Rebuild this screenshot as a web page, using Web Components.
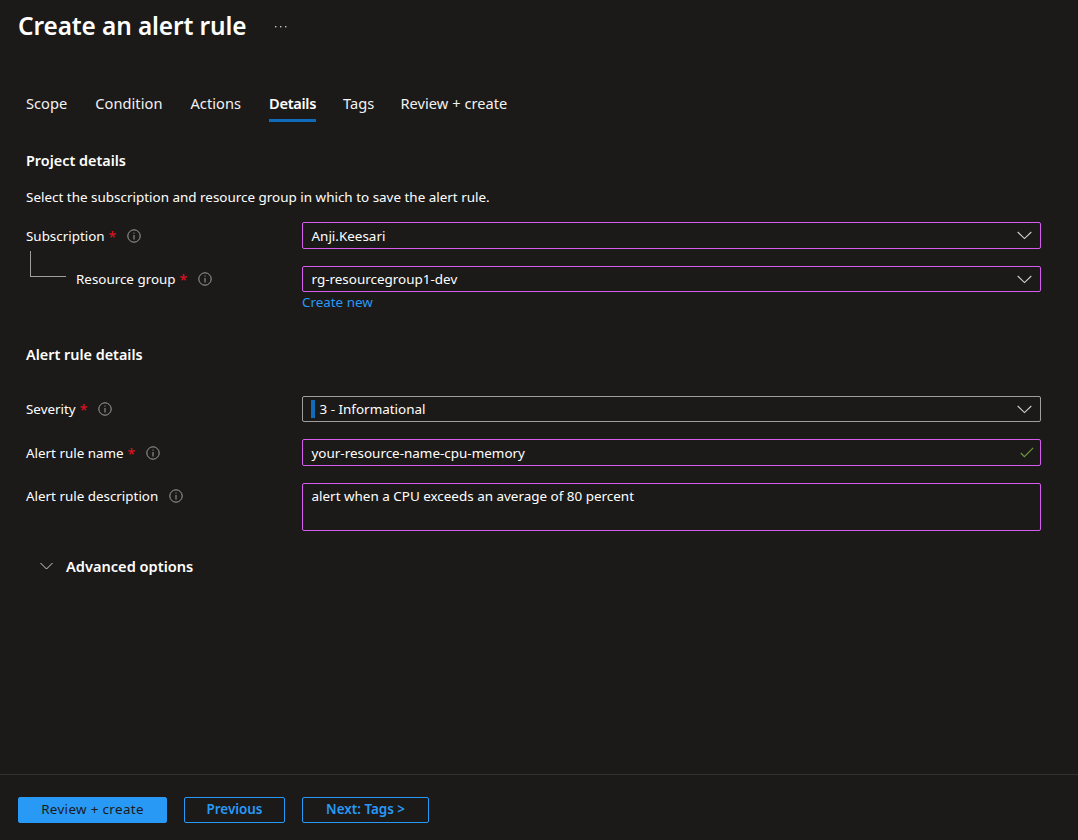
<!DOCTYPE html>
<html lang="en"><head><meta charset="utf-8"><title>Create an alert rule</title>
<style>
html,body{margin:0;height:100%;background:#1b1a19}
body{font:13.4px/18px "Noto Sans","Open Sans",sans-serif;color:#fff;overflow:hidden}
</style></head><body>
<alert-page>
  <page-title slot="title">Create an alert rule</page-title>
  <tab-item slot="tabs">Scope</tab-item>
  <tab-item slot="tabs" style="margin-left:28px">Condition</tab-item>
  <tab-item slot="tabs" style="margin-left:28px">Actions</tab-item>
  <tab-item slot="tabs" active style="margin-left:28px">Details</tab-item>
  <tab-item slot="tabs" style="margin-left:27px">Tags</tab-item>
  <tab-item slot="tabs" style="margin-left:26px">Review + create</tab-item>

  <section-head style="margin-top:29px">Project details</section-head>
  <p-text style="margin-top:17px">Select the subscription and resource group in which to save the alert rule.</p-text>

  <form-row style="margin-top:16px" label="Subscription" required>
    <field-box kind="select" h="27">Anji.Keesari</field-box>
  </form-row>
  <form-row style="margin-top:17px" label="Resource group" required nested tight>
    <field-box kind="select" h="26">rg-resourcegroup1-dev</field-box>
  </form-row>
  <link-text>Create new</link-text>

  <section-head style="margin-top:34px">Alert rule details</section-head>

  <form-row style="margin-top:31px" label="Severity" required tight>
    <field-box kind="select" h="26" neutral sev>3 - Informational</field-box>
  </form-row>
  <form-row style="margin-top:17px" label="Alert rule name" required>
    <field-box kind="check" h="27">your-resource-name-cpu-memory</field-box>
  </form-row>
  <form-row style="margin-top:17px" label="Alert rule description" tight>
    <field-box kind="area" h="48">alert when a CPU exceeds an average of 80 percent</field-box>
  </form-row>

  <advanced-toggle>Advanced options</advanced-toggle>

  <action-button slot="footer" primary w="149">Review + create</action-button>
  <action-button slot="footer" w="101" style="margin-left:17px">Previous</action-button>
  <action-button slot="footer" w="127" style="margin-left:17px">Next: Tags &gt;</action-button>
</alert-page>
<script>
function def(name, html, cls){
  const t=document.createElement('template');t.innerHTML=html;
  customElements.define(name,class extends HTMLElement{
    constructor(){super();this.attachShadow({mode:'open'}).appendChild(t.content.cloneNode(true));}
    connectedCallback(){cls&&cls.call(this,this.shadowRoot);}
  });
}
def('alert-page',`<style>
:host{display:flex;flex-direction:column;height:840px;box-sizing:border-box}
.head{padding:9px 18px 0;display:flex;height:42px;box-sizing:border-box}
.tabs{display:flex;padding:0 26px;margin-top:51px;height:29px}
.body{flex:1;padding:0 37px 0 26px;display:flex;flex-direction:column}
.foot{height:66px;box-sizing:border-box;border-top:1px solid #323130;padding:22px 18px 0;display:flex;align-items:flex-start}
</style>
<div class="head"><slot name="title"></slot></div>
<div class="tabs"><slot name="tabs"></slot></div>
<div class="body"><slot></slot></div>
<div class="foot"><slot name="footer"></slot></div>`);
def('page-title',`<style>
:host{display:flex;align-items:center;font-size:24.4px;line-height:36px;font-weight:600;letter-spacing:-.1px;white-space:nowrap}
.more{margin:2px 0 0 29px;display:block}
</style><slot></slot><svg class="more" width="12" height="4" viewBox="0 0 12 4" aria-hidden="true"><g fill="#c8c6c4"><rect x="0" y="1" width="1.4" height="1.4"/><rect x="5" y="1" width="1.4" height="1.4"/><rect x="10" y="1" width="1.4" height="1.4"/></g></svg>`);
def('tab-item',`<style>
:host{display:block;height:29px;box-sizing:border-box;line-height:20px;font-size:14.6px;letter-spacing:.05px;white-space:nowrap;color:#f3f2f1}
:host([active]){font-weight:600;color:#fff;border-bottom:3px solid #0f6cbd;letter-spacing:-.3px}
</style><slot></slot>`);
def('section-head',`<style>:host{display:block;font-weight:600;font-size:14.4px;line-height:20px}</style><slot></slot>`);
def('p-text',`<style>:host{display:block;font-size:13.45px;line-height:18px;white-space:nowrap;color:#fff}</style><slot></slot>`);
def('link-text',`<style>:host{display:block;margin-left:276px;margin-top:1px;line-height:18px;color:#2899f5;font-size:13.4px}</style><slot></slot>`);
const info=`<svg width="14" height="14" viewBox="0 0 14 14" aria-hidden="true"><circle cx="7" cy="7" r="6.2" fill="none" stroke="#a19f9d" stroke-width="1"/><rect x="6.5" y="6" width="1" height="4.500" fill="#a19f9d"/><rect x="6.5" y="3.600" width="1" height="1" fill="#a19f9d"/></svg>`;
def('form-row',`<style>
:host{display:grid;grid-template-columns:276px 739px;align-items:start}
.lab{display:flex;align-items:center;height:27px;white-space:nowrap;font-size:13.4px;position:relative}
:host([tight]) .lab{margin-top:-1px}
.lab.n{padding-left:50px}
.req{color:#e81123;margin-left:4px;font-size:14px;line-height:14px;height:12px}
.info{display:flex;margin-left:10.5px}
.tree{position:absolute;left:4px;top:-14px;width:36px;height:26px;box-sizing:border-box;border-left:1px solid #a19f9d;border-bottom:1px solid #a19f9d}
</style><div class="lab"><span class="t"></span><span class="req"></span><span class="info">${info}</span></div><slot></slot>`,function(r){
  r.querySelector('.t').textContent=this.getAttribute('label');
  if(this.hasAttribute('required'))r.querySelector('.req').textContent='*';else r.querySelector('.req').remove();
  if(this.hasAttribute('nested')){const l=r.querySelector('.lab');l.classList.add('n');const d=document.createElement('div');d.className='tree';l.prepend(d);}
});
const chev=`<svg width="15" height="9" viewBox="0 0 15 9" aria-hidden="true"><path d="M.7 1 7.500 7.600 14.300 1" fill="none" stroke="#d2d0ce" stroke-width="1.1"/></svg>`;
const chk=`<svg width="14" height="11" viewBox="0 0 14 11" aria-hidden="true"><path d="M.8 6 4.400 9.600 13.200.8" fill="none" stroke="#6b9a3c" stroke-width="1.2"/></svg>`;
def('field-box',`<style>
:host{display:flex;box-sizing:border-box;border:1px solid #d65cf0;border-radius:2px;padding:0 8.5px;align-items:center;font-size:13.45px;white-space:nowrap;color:#fff}
:host([neutral]){border-color:#a19f9d}
:host([kind=area]){align-items:flex-start;padding-top:3px}
.sev{width:4px;height:18px;background:#0f6cbd;margin:0 4.500px 0 -.5px}
.txt{flex:1}
.ic{display:flex}
:host([kind=check]) .ic{margin-right:-2px}
</style><span class="sev"></span><span class="txt"><slot></slot></span><span class="ic"></span>`,function(r){
  this.style.height=this.getAttribute('h')+'px';
  if(!this.hasAttribute('sev'))r.querySelector('.sev').remove();
  const k=this.getAttribute('kind');
  r.querySelector('.ic').innerHTML=k==='select'?chev:k==='check'?chk:'';
});
def('advanced-toggle',`<style>
:host{display:flex;align-items:center;margin-top:25px;padding-left:14px;height:20px;font-weight:600;font-size:14.6px}
svg{margin-right:13px}
</style><svg width="13" height="8" viewBox="0 0 13 8" aria-hidden="true"><path d="M.5 1 6.500 7 12.500 1" fill="none" stroke="#d2d0ce" stroke-width="1"/></svg><slot></slot>`);
def('action-button',`<style>
:host{display:flex;align-items:center;justify-content:center;box-sizing:border-box;height:26px;padding-bottom:2px;border:1px solid #2899f5;border-radius:2px;color:#2899f5;font-weight:600;font-size:13.4px;white-space:nowrap}
:host([primary]){background:#2899f5;color:#1b1a19;font-weight:400;letter-spacing:.35px}
</style><slot></slot>`,function(){this.style.width=this.getAttribute('w')+'px';});
</script>
</body></html>
